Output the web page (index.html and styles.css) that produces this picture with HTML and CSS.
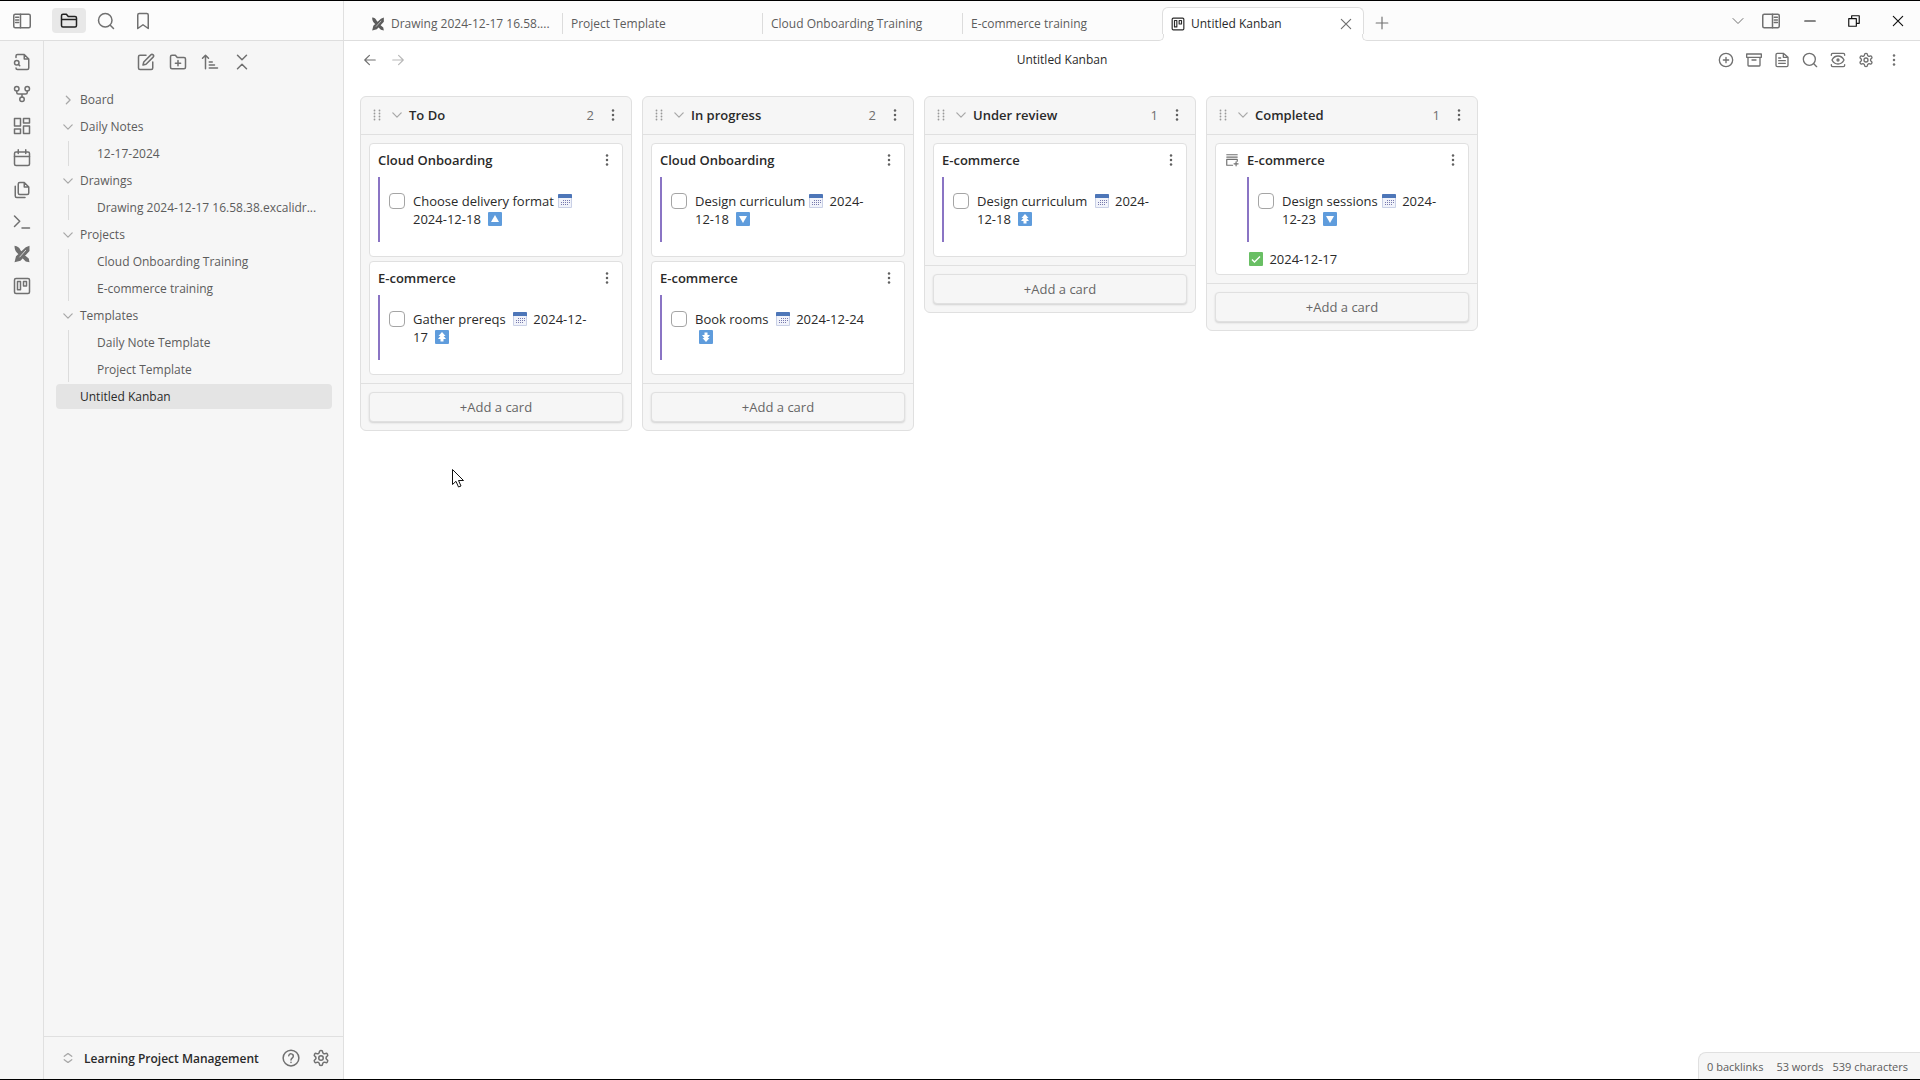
FILE: index.html
```
<!DOCTYPE html>
<html lang="en">
<head>
    <meta charset="UTF-8">
    <meta name="viewport" content="width=device-width, initial-scale=1.0">
    <title>Untitled Kanban</title>
    <link rel="stylesheet" href="styles.css">
</head>
<body>
    <!-- Icon set -->
    <svg class="sprite" aria-hidden="true">
        <symbol id="i-panel-left" viewBox="0 0 24 24"><rect x="1" y="3" width="22" height="18" rx="2"/><path d="M10 3v18M3.500 7h4M3.500 10.500h4M3.500 14h4"/></symbol>
        <symbol id="i-panel-right" viewBox="0 0 24 24"><rect x="1" y="3" width="22" height="18" rx="2"/><path d="M14 3v18M16.500 7h4M16.500 10.500h4M16.500 14h4"/></symbol>
        <symbol id="i-folder" viewBox="0 0 24 24"><path d="M2 10h20M4 20a2 2 0 0 1-2-2V5a2 2 0 0 1 2-2h4.500l2.500 3h9a2 2 0 0 1 2 2v10a2 2 0 0 1-2 2z"/></symbol>
        <symbol id="i-search" viewBox="0 0 24 24"><circle cx="11" cy="11" r="9"/><path d="m22 22-4.300-4.300"/></symbol>
        <symbol id="i-bookmark" viewBox="0 0 24 24"><path d="m19 22-7-5-7 5V4a2 2 0 0 1 2-2h10a2 2 0 0 1 2 2z"/></symbol>
        <symbol id="i-file-search" viewBox="0 0 24 24"><path d="M4 6V4a2 2 0 0 1 2-2h9l6 6v12a2 2 0 0 1-2 2H6a2 2 0 0 1-2-2M15 2v6h6"/><circle cx="5" cy="13" r="3"/><path d="m9 17-1.800-1.800"/></symbol>
        <symbol id="i-graph" viewBox="0 0 24 24"><circle cx="5" cy="5" r="3"/><circle cx="19" cy="5" r="3"/><circle cx="12" cy="19" r="3"/><path d="M5 8v2a2 2 0 0 0 2 2h10a2 2 0 0 0 2-2V8M12 12v4"/></symbol>
        <symbol id="i-dashboard" viewBox="0 0 24 24"><rect x="2" y="2" width="8" height="10"/><rect x="14" y="2" width="8" height="6"/><rect x="14" y="12" width="8" height="10"/><rect x="2" y="16" width="8" height="6"/></symbol>
        <symbol id="i-calendar" viewBox="0 0 24 24"><rect x="2" y="4" width="20" height="18" rx="2"/><path d="M2 10h20M7 1v5M17 1v5"/></symbol>
        <symbol id="i-files" viewBox="0 0 24 24"><path d="M15 2H9a2 2 0 0 0-2 2v12a2 2 0 0 0 2 2h10a2 2 0 0 0 2-2V8zM15 2v6h6M3 7v13a2 2 0 0 0 2 2h11"/></symbol>
        <symbol id="i-terminal" viewBox="0 0 24 24"><path d="m2 18 7-7-7-7M12 20h10"/></symbol>
        <symbol id="i-excalidraw" viewBox="0 0 24 24"><path class="fill" d="M2 1c4 0 7 3 8 6l4 4-4 4-5-5C3 8 2 5 2 1zM22 1v7l-12 13-8 2 2-8L17 3zM15 13l6 5 1 5-5-1-5-5z"/><path class="cut" d="m9 16 8-9"/></symbol>
        <symbol id="i-kanban" viewBox="0 0 24 24"><rect x="2" y="2" width="20" height="20" rx="2"/><path d="M6 6h4v11H6zM14 6h4v6h-4z"/></symbol>
        <symbol id="i-edit" viewBox="0 0 24 24"><path d="M12 3H4a2 2 0 0 0-2 2v15a2 2 0 0 0 2 2h15a2 2 0 0 0 2-2v-8"/><path d="M18.500 2.500a2.100 2.100 0 0 1 3 3L12 15l-4 1 1-4z"/></symbol>
        <symbol id="i-folder-plus" viewBox="0 0 24 24"><path d="M4 21a2 2 0 0 1-2-2V5a2 2 0 0 1 2-2h4.500l2.500 3h9a2 2 0 0 1 2 2v11a2 2 0 0 1-2 2zM12 10v7M8.500 13.500h7"/></symbol>
        <symbol id="i-sort" viewBox="0 0 24 24"><path d="m2 7 4-4 4 4M6 3v18M11 12h4M11 16h7M11 20h11"/></symbol>
        <symbol id="i-collapse" viewBox="0 0 24 24"><path d="m6 21 6-6 6 6M6 3l6 6 6-6"/></symbol>
        <symbol id="i-chevron-right" viewBox="0 0 24 24"><path d="m8 3 9 9-9 9"/></symbol>
        <symbol id="i-chevron-down" viewBox="0 0 24 24"><path d="m2 7 10 10 10-10"/></symbol>
        <symbol id="i-up-down" viewBox="0 0 24 24"><path d="m3 16 9 7 9-7M3 8l9-7 9 7"/></symbol>
        <symbol id="i-help" viewBox="0 0 24 24"><circle cx="12" cy="12" r="10.500"/><path d="M9 9a3 3 0 0 1 6 1c0 2-3 2.500-3 4.500M12 17.500v.5"/></symbol>
        <symbol id="i-gear" viewBox="0 0 24 24"><path d="M12.200 2h-.4a2 2 0 0 0-2 2v.2a2 2 0 0 1-1 1.700l-.4.3a2 2 0 0 1-2 0l-.2-.1a2 2 0 0 0-2.700.7l-.2.400a2 2 0 0 0 .7 2.700l.2.100a2 2 0 0 1 1 1.700v.500a2 2 0 0 1-1 1.800l-.2.100a2 2 0 0 0-.7 2.700l.2.400a2 2 0 0 0 2.700.7l.2-.1a2 2 0 0 1 2 0l.4.300a2 2 0 0 1 1 1.700v.2a2 2 0 0 0 2 2h.4a2 2 0 0 0 2-2v-.2a2 2 0 0 1 1-1.700l.4-.3a2 2 0 0 1 2 0l.2.100a2 2 0 0 0 2.700-.7l.2-.4a2 2 0 0 0-.7-2.700l-.2-.1a2 2 0 0 1-1-1.800v-.5a2 2 0 0 1 1-1.700l.2-.1a2 2 0 0 0 .7-2.700l-.2-.4a2 2 0 0 0-2.700-.7l-.2.100a2 2 0 0 1-2 0l-.4-.3a2 2 0 0 1-1-1.700V4a2 2 0 0 0-2-2z"/><circle cx="12" cy="12" r="3"/></symbol>
        <symbol id="i-close" viewBox="0 0 24 24"><path d="M4 4l16 16M20 4 4 20"/></symbol>
        <symbol id="i-plus" viewBox="0 0 24 24"><path d="M12 2v20M2 12h20"/></symbol>
        <symbol id="i-minimize" viewBox="0 0 24 24"><path d="M3 12h18"/></symbol>
        <symbol id="i-restore" viewBox="0 0 24 24"><path d="M3 8h13v13H3zM8 8V3h13v13h-5"/></symbol>
        <symbol id="i-arrow-left" viewBox="0 0 24 24"><path d="m11 20-8-8 8-8M21 12H3"/></symbol>
        <symbol id="i-arrow-right" viewBox="0 0 24 24"><path d="m13 4 8 8-8 8M3 12h18"/></symbol>
        <symbol id="i-circle-plus" viewBox="0 0 24 24"><circle cx="12" cy="12" r="10"/><path d="M8 12h8M12 8v8"/></symbol>
        <symbol id="i-archive" viewBox="0 0 24 24"><path d="M1 3h22v5H1zM3 8v12a1 1 0 0 0 1 1h16a1 1 0 0 0 1-1V8M9 12h6"/></symbol>
        <symbol id="i-file-text" viewBox="0 0 24 24"><path d="M14 2H5a2 2 0 0 0-2 2v16a2 2 0 0 0 2 2h14a2 2 0 0 0 2-2V8zM14 2v6h7M7 9h3M7 13h10M7 17h10"/></symbol>
        <symbol id="i-view" viewBox="0 0 24 24"><path d="M2 5V4a2 2 0 0 1 2-2h16a2 2 0 0 1 2 2v1M2 19v1a2 2 0 0 0 2 2h16a2 2 0 0 0 2-2v-1M3 12c2-4 5.500-6 9-6s7 2 9 6c-2 4-5.500 6-9 6s-7-2-9-6z"/><circle cx="12" cy="12" r="1.500"/></symbol>
        <symbol id="i-dots" viewBox="0 0 24 24"><g class="fill"><circle cx="12" cy="3" r="2.500"/><circle cx="12" cy="12" r="2.500"/><circle cx="12" cy="21" r="2.500"/></g></symbol>
        <symbol id="i-grip" viewBox="0 0 24 24"><g class="fill"><circle cx="7" cy="3" r="1.800"/><circle cx="7" cy="9" r="1.800"/><circle cx="7" cy="15" r="1.800"/><circle cx="7" cy="21" r="1.800"/><circle cx="17" cy="3" r="1.800"/><circle cx="17" cy="9" r="1.800"/><circle cx="17" cy="15" r="1.800"/><circle cx="17" cy="21" r="1.800"/></g></symbol>
        <symbol id="i-archive-add" viewBox="0 0 24 24"><path d="M3 3h18M3 7h18M3 11h18v3M3 11v10h10M19 15v7M15.500 18.500h7"/></symbol>
        <symbol id="e-calendar" viewBox="0 0 14 14"><rect x="0" y="0" width="14" height="14" rx="1" fill="#c9d0e6"/><rect x="1" y="4" width="12" height="9" fill="#f1f3fa"/><path d="M0 1a1 1 0 0 1 1-1h12a1 1 0 0 1 1 1v3H0z" fill="#4d76b8"/><path d="M5 6h1v1H5zM7 6h1v1H7zM9 6h1v1H9zM11 6h1v1h-1zM3 8h1v1H3zM5 8h1v1H5zM7 8h1v1H7zM9 8h1v1H9zM11 8h1v1h-1zM3 10h1v1H3zM5 10h1v1H5zM7 10h1v1H7zM9 10h1v1H9z" fill="#7779ad"/></symbol>
        <symbol id="e-up" viewBox="0 0 14 14"><rect width="14" height="14" rx="1" fill="#5f9cdc"/><path d="M7 3l4 7H3z" fill="#fff"/></symbol>
        <symbol id="e-down" viewBox="0 0 14 14"><rect width="14" height="14" rx="1" fill="#5f9cdc"/><path d="M7 11L3 4h8z" fill="#fff"/></symbol>
        <symbol id="e-top" viewBox="0 0 14 14"><rect width="14" height="14" rx="1" fill="#5f9cdc"/><path d="M7 2l3.500 4h-7zM7 4l4 5H8.500v2.500h-3V9H3z" fill="#fff"/></symbol>
        <symbol id="e-bottom" viewBox="0 0 14 14"><rect width="14" height="14" rx="1" fill="#5f9cdc"/><path d="M7 12L3.500 8h7zM7 10L3 5h2.500V2.500h3V5H11z" fill="#fff"/></symbol>
        <symbol id="e-done" viewBox="0 0 14 14"><rect width="14" height="14" rx="1" fill="#69bf64"/><path d="M3 7.500l2.500 2.500L11 4.500" fill="none" stroke="#fff" stroke-width="1.400"/></symbol>
    </svg>

    <div class="app">
        <!-- Title bar -->
        <header class="titlebar">
            <div class="titlebar-left">
                <button class="icon-btn toggle" aria-label="Toggle left sidebar"><svg class="icon"><use href="#i-panel-left"/></svg></button>
                <button class="icon-btn panel-tab active" aria-label="Files"><svg class="icon"><use href="#i-folder"/></svg></button>
                <button class="icon-btn panel-tab" aria-label="Search"><svg class="icon"><use href="#i-search"/></svg></button>
                <button class="icon-btn panel-tab" aria-label="Bookmarks"><svg class="icon"><use href="#i-bookmark"/></svg></button>
            </div>
            <nav class="tabs">
                <a class="tab" href="#"><svg class="icon small"><use href="#i-excalidraw"/></svg><span>Drawing 2024-12-17 16.58....</span></a>
                <a class="tab" href="#"><span>Project Template</span></a>
                <a class="tab" href="#"><span>Cloud Onboarding Training</span></a>
                <a class="tab" href="#"><span>E-commerce training</span></a>
                <div class="tab active">
                    <svg class="icon small"><use href="#i-kanban"/></svg><span>Untitled Kanban</span>
                    <button class="icon-btn tab-close" aria-label="Close tab"><svg class="icon small"><use href="#i-close"/></svg></button>
                </div>
                <button class="icon-btn new-tab" aria-label="New tab"><svg class="icon small"><use href="#i-plus"/></svg></button>
            </nav>
            <div class="window-controls">
                <button class="icon-btn tab-list" aria-label="Tab list"><svg class="icon tiny"><use href="#i-chevron-down"/></svg></button>
                <button class="icon-btn right-toggle" aria-label="Toggle right sidebar"><svg class="icon"><use href="#i-panel-right"/></svg></button>
                <button class="window-btn" aria-label="Minimize"><svg class="icon small"><use href="#i-minimize"/></svg></button>
                <button class="window-btn" aria-label="Restore"><svg class="icon small"><use href="#i-restore"/></svg></button>
                <button class="window-btn" aria-label="Close"><svg class="icon small"><use href="#i-close"/></svg></button>
            </div>
        </header>

        <div class="workspace">
            <!-- Ribbon -->
            <nav class="ribbon">
                <button class="icon-btn" aria-label="Quick switcher"><svg class="icon"><use href="#i-file-search"/></svg></button>
                <button class="icon-btn" aria-label="Graph view"><svg class="icon"><use href="#i-graph"/></svg></button>
                <button class="icon-btn" aria-label="Canvas"><svg class="icon"><use href="#i-dashboard"/></svg></button>
                <button class="icon-btn" aria-label="Daily note"><svg class="icon"><use href="#i-calendar"/></svg></button>
                <button class="icon-btn" aria-label="Insert template"><svg class="icon"><use href="#i-files"/></svg></button>
                <button class="icon-btn" aria-label="Command palette"><svg class="icon"><use href="#i-terminal"/></svg></button>
                <button class="icon-btn" aria-label="New drawing"><svg class="icon"><use href="#i-excalidraw"/></svg></button>
                <button class="icon-btn" aria-label="New board"><svg class="icon"><use href="#i-kanban"/></svg></button>
            </nav>

            <!-- File explorer -->
            <aside class="sidebar">
                <div class="nav-buttons">
                    <button class="icon-btn" aria-label="New note"><svg class="icon"><use href="#i-edit"/></svg></button>
                    <button class="icon-btn" aria-label="New folder"><svg class="icon"><use href="#i-folder-plus"/></svg></button>
                    <button class="icon-btn" aria-label="Sort order"><svg class="icon"><use href="#i-sort"/></svg></button>
                    <button class="icon-btn" aria-label="Collapse all"><svg class="icon"><use href="#i-collapse"/></svg></button>
                </div>
                <nav class="file-tree">
                    <a class="tree-item" href="#"><svg class="icon caret"><use href="#i-chevron-right"/></svg>Board</a>
                    <a class="tree-item" href="#"><svg class="icon caret"><use href="#i-chevron-down"/></svg>Daily Notes</a>
                    <div class="tree-children">
                        <a class="tree-item" href="#">12-17-2024</a>
                    </div>
                    <a class="tree-item" href="#"><svg class="icon caret"><use href="#i-chevron-down"/></svg>Drawings</a>
                    <div class="tree-children">
                        <a class="tree-item" href="#">Drawing 2024-12-17 16.58.38.excalidr...</a>
                    </div>
                    <a class="tree-item" href="#"><svg class="icon caret"><use href="#i-chevron-down"/></svg>Projects</a>
                    <div class="tree-children">
                        <a class="tree-item" href="#">Cloud Onboarding Training</a>
                        <a class="tree-item" href="#">E-commerce training</a>
                    </div>
                    <a class="tree-item" href="#"><svg class="icon caret"><use href="#i-chevron-down"/></svg>Templates</a>
                    <div class="tree-children">
                        <a class="tree-item" href="#">Daily Note Template</a>
                        <a class="tree-item" href="#">Project Template</a>
                    </div>
                    <a class="tree-item root-file selected" href="#">Untitled Kanban</a>
                </nav>
                <div class="vault">
                    <button class="vault-switch"><svg class="icon caret"><use href="#i-up-down"/></svg>Learning Project Management</button>
                    <button class="icon-btn" aria-label="Help"><svg class="icon"><use href="#i-help"/></svg></button>
                    <button class="icon-btn" aria-label="Settings"><svg class="icon"><use href="#i-gear"/></svg></button>
                </div>
            </aside>

            <!-- Board view -->
            <main class="view">
                <div class="view-header">
                    <div class="view-nav">
                        <button class="icon-btn" aria-label="Back"><svg class="icon small"><use href="#i-arrow-left"/></svg></button>
                        <button class="icon-btn disabled" aria-label="Forward" disabled><svg class="icon small"><use href="#i-arrow-right"/></svg></button>
                    </div>
                    <h1 class="view-title">Untitled Kanban</h1>
                    <div class="view-actions">
                        <button class="icon-btn" aria-label="Add a list"><svg class="icon medium"><use href="#i-circle-plus"/></svg></button>
                        <button class="icon-btn" aria-label="Archive completed cards"><svg class="icon medium"><use href="#i-archive"/></svg></button>
                        <button class="icon-btn" aria-label="Open as markdown"><svg class="icon medium"><use href="#i-file-text"/></svg></button>
                        <button class="icon-btn" aria-label="Search board"><svg class="icon medium"><use href="#i-search"/></svg></button>
                        <button class="icon-btn" aria-label="Board view"><svg class="icon medium"><use href="#i-view"/></svg></button>
                        <button class="icon-btn" aria-label="Board settings"><svg class="icon medium"><use href="#i-gear"/></svg></button>
                        <button class="icon-btn" aria-label="More options"><svg class="icon tiny"><use href="#i-dots"/></svg></button>
                    </div>
                </div>

                <div class="board">
                    <section class="lane">
                        <div class="lane-header">
                            <svg class="icon grip"><use href="#i-grip"/></svg>
                            <svg class="icon caret"><use href="#i-chevron-down"/></svg>
                            <h2>To Do</h2>
                            <span class="count">2</span>
                            <button class="menu-btn" aria-label="List options"><svg class="icon tiny"><use href="#i-dots"/></svg></button>
                        </div>
                        <div class="lane-items">
                            <article class="card">
                                <div class="card-body">
                                    <h3>Cloud Onboarding</h3>
                                    <label class="task"><input type="checkbox"><span>Choose delivery format<svg class="emoji"><use href="#e-calendar"/></svg><br>2024-12-18 <svg class="emoji"><use href="#e-up"/></svg></span></label>
                                </div>
                                <button class="menu-btn" aria-label="Card options"><svg class="icon tiny"><use href="#i-dots"/></svg></button>
                            </article>
                            <article class="card">
                                <div class="card-body">
                                    <h3>E-commerce</h3>
                                    <label class="task"><input type="checkbox"><span>Gather prereqs <svg class="emoji"><use href="#e-calendar"/></svg> 2024-12-<br>17 <svg class="emoji"><use href="#e-top"/></svg></span></label>
                                </div>
                                <button class="menu-btn" aria-label="Card options"><svg class="icon tiny"><use href="#i-dots"/></svg></button>
                            </article>
                        </div>
                        <div class="lane-footer"><button class="add-card">+Add a card</button></div>
                    </section>

                    <section class="lane">
                        <div class="lane-header">
                            <svg class="icon grip"><use href="#i-grip"/></svg>
                            <svg class="icon caret"><use href="#i-chevron-down"/></svg>
                            <h2>In progress</h2>
                            <span class="count">2</span>
                            <button class="menu-btn" aria-label="List options"><svg class="icon tiny"><use href="#i-dots"/></svg></button>
                        </div>
                        <div class="lane-items">
                            <article class="card">
                                <div class="card-body">
                                    <h3>Cloud Onboarding</h3>
                                    <label class="task"><input type="checkbox"><span>Design curriculum<svg class="emoji"><use href="#e-calendar"/></svg> 2024-<br>12-18 <svg class="emoji"><use href="#e-down"/></svg></span></label>
                                </div>
                                <button class="menu-btn" aria-label="Card options"><svg class="icon tiny"><use href="#i-dots"/></svg></button>
                            </article>
                            <article class="card">
                                <div class="card-body">
                                    <h3>E-commerce</h3>
                                    <label class="task"><input type="checkbox"><span>Book rooms <svg class="emoji"><use href="#e-calendar"/></svg> 2024-12-24<br><svg class="emoji"><use href="#e-bottom"/></svg></span></label>
                                </div>
                                <button class="menu-btn" aria-label="Card options"><svg class="icon tiny"><use href="#i-dots"/></svg></button>
                            </article>
                        </div>
                        <div class="lane-footer"><button class="add-card">+Add a card</button></div>
                    </section>

                    <section class="lane">
                        <div class="lane-header">
                            <svg class="icon grip"><use href="#i-grip"/></svg>
                            <svg class="icon caret"><use href="#i-chevron-down"/></svg>
                            <h2>Under review</h2>
                            <span class="count">1</span>
                            <button class="menu-btn" aria-label="List options"><svg class="icon tiny"><use href="#i-dots"/></svg></button>
                        </div>
                        <div class="lane-items">
                            <article class="card">
                                <div class="card-body">
                                    <h3>E-commerce</h3>
                                    <label class="task"><input type="checkbox"><span>Design curriculum <svg class="emoji"><use href="#e-calendar"/></svg> 2024-<br>12-18 <svg class="emoji"><use href="#e-top"/></svg></span></label>
                                </div>
                                <button class="menu-btn" aria-label="Card options"><svg class="icon tiny"><use href="#i-dots"/></svg></button>
                            </article>
                        </div>
                        <div class="lane-footer"><button class="add-card">+Add a card</button></div>
                    </section>

                    <section class="lane">
                        <div class="lane-header">
                            <svg class="icon grip"><use href="#i-grip"/></svg>
                            <svg class="icon caret"><use href="#i-chevron-down"/></svg>
                            <h2>Completed</h2>
                            <span class="count">1</span>
                            <button class="menu-btn" aria-label="List options"><svg class="icon tiny"><use href="#i-dots"/></svg></button>
                        </div>
                        <div class="lane-items">
                            <article class="card">
                                <button class="archive-btn" aria-label="Archive card"><svg class="icon small"><use href="#i-archive-add"/></svg></button>
                                <div class="card-body">
                                    <h3>E-commerce</h3>
                                    <label class="task"><input type="checkbox"><span>Design sessions<svg class="emoji"><use href="#e-calendar"/></svg> 2024-<br>12-23 <svg class="emoji"><use href="#e-down"/></svg></span></label>
                                    <p class="done"><svg class="emoji"><use href="#e-done"/></svg> 2024-12-17</p>
                                </div>
                                <button class="menu-btn" aria-label="Card options"><svg class="icon tiny"><use href="#i-dots"/></svg></button>
                            </article>
                        </div>
                        <div class="lane-footer"><button class="add-card">+Add a card</button></div>
                    </section>
                </div>

                <footer class="status-bar">
                    <span class="backlinks">0 backlinks</span>
                    <span>53 words</span>
                    <span>539 characters</span>
                </footer>
            </main>
        </div>
    </div>

    <svg class="cursor" viewBox="0 0 12 19"><path d="M.5.5v15l3.500-3.200 2.500 5.700 2.500-1-2.500-5.500h5z"/></svg>
</body>
</html>
```
FILE: styles.css
```
/* General Reset */
* {
    margin: 0;
    padding: 0;
    box-sizing: border-box;
}

body {
    height: 100vh;
    overflow: hidden;
    font-family: "Open Sans", "Noto Sans", sans-serif;
    font-size: 12px;
    color: #2a2a2a;
    background: #fff;
}

button {
    border: none;
    background: none;
    font: inherit;
    color: inherit;
    cursor: pointer;
}

a {
    color: inherit;
    text-decoration: none;
}

.app {
    display: flex;
    flex-direction: column;
    height: 100vh;
    border-top: 1px solid #000;
    border-bottom: 1px solid #000;
}

/* Icons */
.sprite {
    display: none;
}

.icon {
    width: 18px;
    height: 18px;
    flex-shrink: 0;
    fill: none;
    stroke: currentColor;
    stroke-width: 2;
    stroke-linecap: round;
    stroke-linejoin: round;
}

.icon.medium {
    width: 16px;
    height: 16px;
}

.icon.small {
    width: 14px;
    height: 14px;
}

.icon.tiny {
    width: 12px;
    height: 12px;
}

.icon.caret {
    width: 10px;
    height: 10px;
    color: #a8a8a8;
    stroke-width: 3;
}

.fill {
    fill: currentColor;
    stroke: none;
}

.cut {
    stroke: #f6f6f6;
    stroke-width: 1;
}

.icon-btn {
    display: flex;
    align-items: center;
    justify-content: center;
    color: #707070;
}

/* Title Bar */
.titlebar {
    display: flex;
    height: 40px;
    flex-shrink: 0;
    background: #fcfcfc;
    border-bottom: 1px solid #dedede;
}

.titlebar-left {
    display: flex;
    align-items: center;
    width: 344px;
    flex-shrink: 0;
    border-right: 1px solid #e0e0e0;
}

.toggle {
    width: 44px;
    margin-right: 8px;
}

.panel-tab {
    width: 34px;
    height: 25px;
    margin-right: 3px;
    border-radius: 4px;
}

.panel-tab.active {
    background: #e8e8e8;
    color: #222;
}

.tabs {
    display: flex;
    flex: 1;
    padding: 6px 0 0 18px;
}

.tab {
    position: relative;
    display: flex;
    align-items: center;
    gap: 6px;
    width: 200px;
    padding: 0 6px 0 9px;
    color: #5c5c5c;
    white-space: nowrap;
}

.tab:not(.active)::after {
    content: "";
    position: absolute;
    right: -1px;
    top: 6px;
    bottom: 6px;
    width: 1px;
    background: #dcdcdc;
}

.tab:nth-child(4)::after {
    display: none;
}

.tab.active {
    width: 202px;
    height: 34px;
    padding: 0 10px 2px 8px;
    border: 1px solid #dedede;
    border-bottom: none;
    border-radius: 6px 6px 0 0;
    background: #fff;
    color: #2a2a2a;
}

/* Rounded feet of the active tab */
.tab.active::before,
.tab.active::after {
    content: "";
    position: absolute;
    bottom: 0;
    width: 6px;
    height: 6px;
    border-bottom: 1px solid #dedede;
    background: #fcfcfc;
}

.tab.active::before {
    left: -6px;
    border-right: 1px solid #dedede;
    border-radius: 0 0 5px 0;
    box-shadow: 1px 1px 0 #fff;
}

.tab.active::after {
    right: -6px;
    border-left: 1px solid #dedede;
    border-radius: 0 0 0 5px;
    box-shadow: -1px 1px 0 #fff;
}

.tab-close {
    margin-left: auto;
}

.new-tab {
    width: 36px;
    padding-bottom: 2px;
}

.window-controls {
    display: flex;
    align-items: center;
}

.tab-list {
    width: 32px;
}

.right-toggle {
    width: 34px;
}

.window-btn {
    display: flex;
    align-items: center;
    justify-content: center;
    width: 44px;
    height: 39px;
    color: #111;
}

/* Workspace */
.workspace {
    display: flex;
    flex: 1;
    min-height: 0;
}

.ribbon {
    display: flex;
    flex-direction: column;
    gap: 8px;
    width: 44px;
    padding-top: 9px;
    flex-shrink: 0;
    background: #f6f6f6;
    border-right: 1px solid #e0e0e0;
}

.ribbon .icon-btn {
    height: 24px;
}

.sidebar {
    display: flex;
    flex-direction: column;
    width: 300px;
    flex-shrink: 0;
    background: #f6f6f6;
    border-right: 1px solid #e0e0e0;
}

.nav-buttons {
    display: flex;
    justify-content: center;
    gap: 8px;
    padding: 9px 0 13px;
}

.nav-buttons .icon-btn {
    width: 24px;
    height: 24px;
}

/* File Tree */
.file-tree {
    flex: 1;
    padding: 0 11px 0 12px;
}

.tree-item {
    display: flex;
    align-items: center;
    gap: 7px;
    height: 25px;
    margin-bottom: 2px;
    padding-left: 7px;
    border-radius: 4px;
    color: #5c5c5c;
    white-space: nowrap;
}

.tree-children {
    margin-left: 12px;
    border-left: 1px solid #dcdcdc;
    padding-left: 21px;
}

.tree-item.root-file {
    padding-left: 24px;
}

.tree-item.selected {
    background: #e4e4e4;
    color: #2a2a2a;
}

.vault {
    display: flex;
    align-items: center;
    gap: 6px;
    height: 43px;
    padding: 0 10px 0 19px;
    border-top: 1px solid #e0e0e0;
}

.vault-switch {
    display: flex;
    align-items: center;
    gap: 11px;
    flex: 1;
    font-weight: 600;
    white-space: nowrap;
}

.vault .icon-btn {
    width: 24px;
    height: 24px;
}

/* View */
.view {
    position: relative;
    display: flex;
    flex: 1;
    flex-direction: column;
    min-width: 0;
}

.view-header {
    display: flex;
    align-items: center;
    height: 37px;
    padding: 0 12px;
}

.view-nav,
.view-actions {
    display: flex;
}

.view-header .icon-btn {
    width: 28px;
    height: 28px;
}

.view-header .disabled {
    color: #b8b8b8;
}

.view-title {
    flex: 1;
    font-size: 12px;
    font-weight: 400;
    text-align: center;
}

/* Board */
.board {
    display: flex;
    align-items: flex-start;
    flex: 1;
    gap: 10px;
    padding: 18px 16px;
}

.lane {
    width: 272px;
    flex-shrink: 0;
    background: #f6f6f6;
    border: 1px solid #e0e0e0;
    border-radius: 6px;
}

.lane-header {
    display: flex;
    align-items: center;
    height: 38px;
    padding: 0 12px 2px 10px;
    border-bottom: 1px solid #e0e0e0;
}

.lane-header h2 {
    flex: 1;
    margin-left: 7px;
    font-size: 13px;
    font-weight: 600;
}

.icon.grip {
    width: 12px;
    height: 12px;
    margin-right: 9px;
    color: #999;
}

.count {
    margin-right: 13px;
    font-size: 13px;
    color: #707070;
}

.menu-btn {
    display: flex;
    align-self: flex-start;
    color: #606060;
}

.lane-header .menu-btn {
    align-self: center;
}

.lane-items {
    display: flex;
    flex-direction: column;
    gap: 4px;
    padding: 8px;
}

.card {
    display: flex;
    padding: 7px 9px 6px 8px;
    background: #fff;
    border: 1px solid #e0e0e0;
    border-radius: 4px;
    font-size: 13px;
    line-height: 18px;
}

.card .menu-btn {
    padding-top: 3px;
}

.archive-btn {
    display: flex;
    align-self: flex-start;
    padding: 2px 8px 0 1px;
    color: #707070;
}

.card-body {
    flex: 1;
    min-width: 0;
}

.card h3 {
    font-size: 13px;
    font-weight: 600;
}

.task {
    display: flex;
    gap: 8px;
    margin: 8px 0;
    padding: 15px 0 14px 9px;
    border-left: 2px solid #8a74c4;
    white-space: nowrap;
}

.task input {
    appearance: none;
    width: 16px;
    height: 16px;
    flex-shrink: 0;
    margin-top: 1px;
    border: 1px solid #a5a5a5;
    border-radius: 4px;
    background: #fff;
}

.emoji {
    width: 14px;
    height: 14px;
    margin: 0 3px 0 4px;
    vertical-align: -2px;
}

.done .emoji {
    margin-left: 2px;
}

.lane-footer {
    padding: 8px;
    border-top: 1px solid #e0e0e0;
}

.add-card {
    width: 100%;
    height: 30px;
    border: 1px solid #e0e0e0;
    border-radius: 4px;
    background: #f6f6f6;
    box-shadow: 0 1px 2px rgba(0, 0, 0, 0.15);
    font-size: 13px;
    color: #666;
}

/* Status Bar */
.status-bar {
    position: absolute;
    right: 0;
    bottom: 0;
    display: flex;
    align-items: center;
    gap: 9px;
    height: 27px;
    padding: 0 12px 0 8px;
    background: #f6f6f6;
    border: 1px solid #e0e0e0;
    border-width: 1px 0 0 1px;
    border-radius: 8px 0 0 0;
    font-size: 11px;
    color: #5c5c5c;
}

.backlinks {
    margin-right: 4px;
}

/* Mouse Pointer */
.cursor {
    position: absolute;
    left: 452px;
    top: 469px;
    width: 12px;
    height: 19px;
    fill: #fff;
    stroke: #111;
    pointer-events: none;
}
```
